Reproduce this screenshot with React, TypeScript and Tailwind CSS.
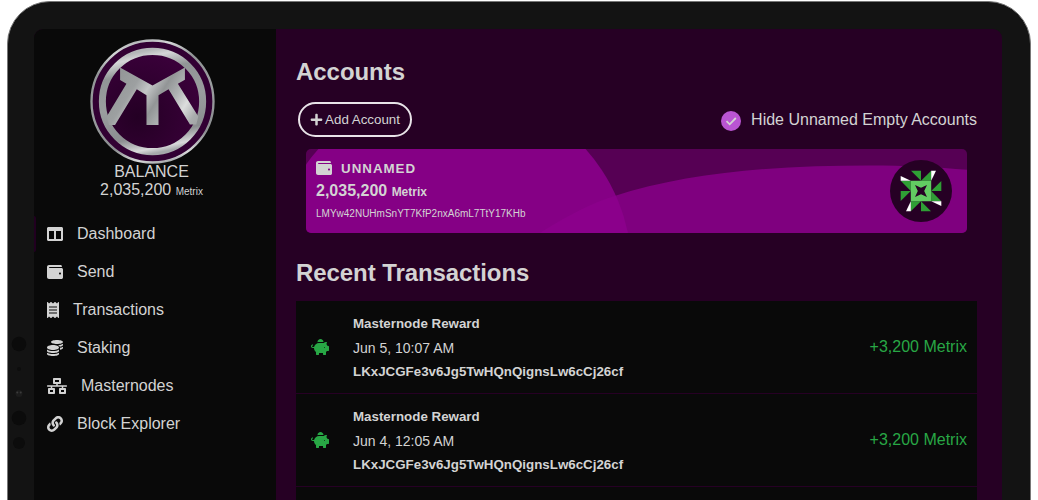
import { FaCoins, FaColumns, FaLink, FaNetworkWired, FaPiggyBank, FaPlus, FaReceipt, FaWallet } from "react-icons/fa";

const nav = [
  { label: "Dashboard", Icon: FaColumns, size: "w-4" },
  { label: "Send", Icon: FaWallet, size: "w-4" },
  { label: "Transactions", Icon: FaReceipt, size: "w-3" },
  { label: "Staking", Icon: FaCoins, size: "w-4" },
  { label: "Masternodes", Icon: FaNetworkWired, size: "w-5" },
  { label: "Block Explorer", Icon: FaLink, size: "w-4" },
];

const transactions = [
  { date: "Jun 5, 10:07 AM", amount: "+3,200 Metrix" },
  { date: "Jun 4, 12:05 AM", amount: "+3,200 Metrix" },
];

const wave = "M528 241Q580 207 613 197C690 172 780 166 870 166C905 166 940 168 970 170.500V241Z";

function Logo() {
  return (
    <svg viewBox="59 40 374 374" className="h-[125px] w-[125px] shrink-0">
      <defs>
        <linearGradient id="silver" gradientUnits="userSpaceOnUse" x1="110" y1="130" x2="380" y2="300">
          <stop offset="0" stopColor="#8d9091" />
          <stop offset="0.3" stopColor="#9da0a1" />
          <stop offset="0.42" stopColor="#c3c5c6" />
          <stop offset="0.55" stopColor="#929596" />
          <stop offset="0.68" stopColor="#b0b3b4" />
          <stop offset="0.8" stopColor="#dcdddd" />
          <stop offset="0.92" stopColor="#aaadae" />
          <stop offset="1" stopColor="#a0a3a4" />
        </linearGradient>
        <linearGradient id="ring" x1="0.4" y1="0" x2="0.6" y2="1">
          <stop offset="0" stopColor="#b4b7b8" />
          <stop offset="0.06" stopColor="#d4d6d7" />
          <stop offset="0.2" stopColor="#919596" />
          <stop offset="0.5" stopColor="#9a9d9f" />
          <stop offset="0.82" stopColor="#8b8e90" />
          <stop offset="0.95" stopColor="#d8d9da" />
          <stop offset="1" stopColor="#a5a8aa" />
        </linearGradient>
        <radialGradient id="plum" cx="0.35" cy="0.65" r="0.7">
          <stop offset="0" stopColor="#240024" />
          <stop offset="1" stopColor="#3b003b" />
        </radialGradient>
      </defs>
      <circle cx="246" cy="227" r="182.500" fill="#320033" stroke="url(#ring)" strokeWidth="7" />
      <circle cx="246" cy="227" r="150" fill="url(#plum)" stroke="url(#ring)" strokeWidth="21" />
      <path
        d="M149 125 L246 179 L343 125 V162 L322 174 L383 272 L377 296 H358 L294 190 L264 208 V297 H228 V208 L199 190 L134 297 H116 L109 272 L168 174 L149 163Z"
        fill="url(#silver)"
      />
    </svg>
  );
}

function Identicon() {
  return (
    <svg viewBox="-31 -31 62 62" className="h-[62px] w-[62px]">
      <circle r="31" fill="#260024" />
      {[0, 90, 180, 270].map((angle) => (
        <g key={angle} transform={`rotate(${angle})`}>
          <path d="M-10 -20.3H0V-10.2Z" fill="#2f9e35" />
          <path d="M0 -10.2L10.2 -20.3V-10.2Z" fill="#2f9e35" />
          <path d="M10.2 -20.3H15L10.2 -10.2Z" fill="#fff" />
        </g>
      ))}
      <path d="M-10.2 -10.2H10.2V10.2H-10.2Z" fill="#62cb62" />
      <path d="M-6 -6L0 -3.2L6 -6L3.2 0L6 6L0 3.2L-6 6L-3.2 0Z" fill="#260024" />
    </svg>
  );
}

function Camera() {
  return (
    <svg viewBox="0 0 27 130" className="mt-[322px] h-[130px] w-[27px]">
      <circle cx="11" cy="15" r="7.3" fill="#0b0b0b" />
      <circle cx="11" cy="40" r="2" fill="#0d0d0d" />
      <circle cx="11" cy="64.500" r="3.500" fill="#1c1c1c" />
      <circle cx="9.300" cy="63.500" r="1" fill="#3b3b3b" />
      <circle cx="12.700" cy="63.500" r="1" fill="#3b3b3b" />
      <circle cx="11" cy="89" r="7.3" fill="#0b0b0b" />
      <circle cx="11" cy="114" r="6" fill="#0c0c0c" />
    </svg>
  );
}

function AccountCard() {
  return (
    <section className="relative ml-[10px] mt-3 flex h-[84px] w-[661px] justify-between overflow-hidden rounded-[5px] bg-[#560054]">
      <svg viewBox="306 149.500 661 84" className="absolute inset-0 h-full w-full">
        <path d={wave} fill="#7f007f" />
        <circle cx="452" cy="269.400" r="179.500" fill="#850085" />
        <clipPath id="disc">
          <circle cx="452" cy="269.400" r="179.500" />
        </clipPath>
        <path d={wave} fill="#8b008b" clipPath="url(#disc)" />
      </svg>
      <div className="relative pl-[10px] pt-[9px]">
        <div className="flex h-5 items-center gap-[9px]">
          <FaWallet className="h-4 w-4" />
          <span className="pt-[2px] text-[13.333px] font-bold tracking-[1px]">UNNAMED</span>
        </div>
        <div className="h-6 text-base font-bold leading-[25px]">
          2,035,200 <span className="text-xs">Metrix</span>
        </div>
        <div className="text-[10px] leading-6">LMYw42NUHmSnYT7KfP2nxA6mL7TtY17KHb</div>
      </div>
      <div className="relative pr-[15px] pt-[11px]">
        <Identicon />
      </div>
    </section>
  );
}

export default function App() {
  return (
    <div className="h-[500px] w-[1038px] overflow-hidden bg-white pl-[7px] pt-px font-['Liberation_Sans',Arial,sans-serif] text-[#d3d3d3]">
      <div className="flex h-[560px] w-[1024px] rounded-[43px] border border-[#777] bg-[#131313] pt-[27px]">
        <div className="-mt-[22px] w-[26px] shrink-0">
          <Camera />
        </div>
        <div className="flex h-[520px] w-[968px] overflow-hidden rounded-t-[9px] bg-[#260024]">
          <aside className="flex w-[242px] shrink-0 flex-col bg-[#090909]">
            <div className="flex flex-col items-center pr-[6px] pt-[9.500px]">
              <Logo />
              <div className="-mt-[0.500px] h-[18px] pr-px text-base leading-[18px]">BALANCE</div>
              <div className="pr-px text-base leading-[18px]">
                2,035,200 <span className="text-[10px]">Metrix</span>
              </div>
            </div>
            <nav className="mt-[14px]">
              {nav.map(({ label, Icon, size }, index) => (
                <div key={label} className="flex h-[38px] items-center">
                  <span className={index === 0 ? "h-9 w-[2px] rounded-r bg-[#210020]" : "h-9 w-[2px]"} />
                  <Icon className={`ml-[11px] h-4 ${size}`} />
                  <span className="ml-[14px] text-base leading-[18px]">{label}</span>
                </div>
              ))}
            </nav>
          </aside>
          <main className="w-[726px] pl-5 pt-[28px]">
            <h1 className="text-2xl font-bold leading-[30px] tracking-[-0.05px]">Accounts</h1>
            <div className="mt-[15px] flex h-[35px] w-[681px] items-center justify-between pl-[2px]">
              <button className="flex h-[35px] w-[114px] items-center justify-center gap-[2px] rounded-full border-2 border-[#e8e3e8] text-[13.333px]">
                <FaPlus className="h-[13.333px] w-[13px]" />
                Add Account
              </button>
              <label className="flex items-center gap-[10px] text-base leading-5">
                <svg viewBox="0 0 20 20" className="mt-[2px] h-5 w-5">
                  <circle cx="10" cy="10" r="10" fill="#ba55d3" />
                  <path d="M5.500 10.200L8.700 13.300L14.800 7" fill="none" stroke="#d3d3d3" strokeWidth="1.800" />
                </svg>
                <span>Hide Unnamed Empty Accounts</span>
              </label>
            </div>
            <AccountCard />
            <h2 className="mt-[25px] text-2xl font-bold leading-[30px] tracking-[-0.08px]">Recent Transactions</h2>
            <div className="mt-[13px] w-[681px]">
              {transactions.map(({ date, amount }) => (
                <div key={date} className="flex h-[93px] items-center border-b border-[#260024] bg-[#090909]">
                  <FaPiggyBank className="ml-[15px] h-4 w-[18px] text-[#28a745]" />
                  <div className="ml-6 pt-[2px] text-sm leading-6">
                    <div className="text-[13.333px] font-bold">Masternode Reward</div>
                    <div>{date}</div>
                    <div className="text-[13.333px] font-bold">LKxJCGFe3v6Jg5TwHQnQignsLw6cCj26cf</div>
                  </div>
                  <div className="ml-auto pr-[10px] text-base text-[#28a745]">{amount}</div>
                </div>
              ))}
              <div className="h-[92px] bg-[#090909]" />
            </div>
          </main>
        </div>
      </div>
    </div>
  );
}
